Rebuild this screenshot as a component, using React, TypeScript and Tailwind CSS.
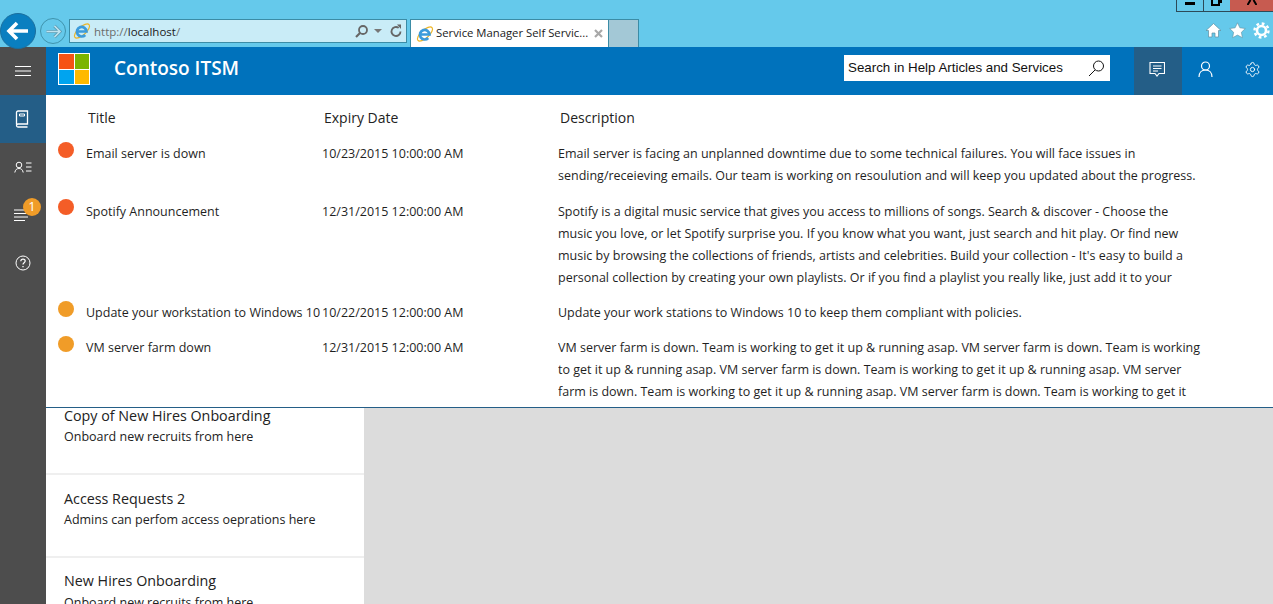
import type { ReactNode } from "react";
import { Settings } from "lucide-react";

const uiFont = { fontFamily: '"Open Sans", "Noto Sans", sans-serif' };

const notices = [
  {
    title: "Email server is down",
    expiry: "10/23/2015 10:00:00 AM",
    dot: "bg-[#f45d27]",
    textTop: "mt-[1px]",
    description:
      "Email server is facing an unplanned downtime due to some technical failures. You will face issues in sending/receieving emails. Our team is working on resoulution and will keep you updated about the progress.",
  },
  {
    title: "Spotify Announcement",
    expiry: "12/31/2015 12:00:00 AM",
    dot: "bg-[#f45d27]",
    textTop: "mt-[2px]",
    description:
      "Spotify is a digital music service that gives you access to millions of songs. Search & discover - Choose the music you love, or let Spotify surprise you. If you know what you want, just search and hit play. Or find new music by browsing the collections of friends, artists and celebrities. Build your collection - It's easy to build a personal collection by creating your own playlists. Or if you find a playlist you really like, just add it to your collection and listen to it any time you want to.",
  },
  {
    title: "Update your workstation to Windows 10",
    expiry: "10/22/2015 12:00:00 AM",
    dot: "bg-[#f09c28]",
    textTop: "mt-[1px]",
    description: "Update your work stations to Windows 10 to keep them compliant with policies.",
  },
  {
    title: "VM server farm down",
    expiry: "12/31/2015 12:00:00 AM",
    dot: "bg-[#f09c28]",
    textTop: "mt-[1px]",
    description:
      "VM server farm is down. Team is working to get it up & running asap. VM server farm is down. Team is working to get it up & running asap. VM server farm is down. Team is working to get it up & running asap. VM server farm is down. Team is working to get it up & running asap. VM server farm is down. Team is working to get it up & running asap.",
  },
];

const cards = [
  { title: "Copy of New Hires Onboarding", text: "Onboard new recruits from here", box: "h-[65px]", head: "leading-[16px]", sub: "mt-[4px]" },
  { title: "Access Requests 2", text: "Admins can perfom access oeprations here", box: "h-[81px]", head: "pt-[15px] leading-[18px]", sub: "mt-[3px]" },
  { title: "New Hires Onboarding", text: "Onboard new recruits from here", box: "h-[81px]", head: "pt-[14px] leading-[18px]", sub: "mt-[4px]" },
];

function IeIcon() {
  return (
    <svg width="18" height="18" viewBox="0 0 18 18" className="shrink-0">
      <ellipse cx="9" cy="9" rx="9.500" ry="4" transform="rotate(-42 9 9)" fill="none" stroke="#eeb422" strokeWidth="1.200" />
      <path d="M4.500 9.500h9a4.800 4.800 0 1 0-1.300 3.500" fill="none" stroke="#3b9bdc" strokeWidth="2.700" />
    </svg>
  );
}

function WinLogo() {
  return (
    <div className="mb-[4px] grid h-8 w-8 grid-cols-2 gap-[1px] bg-white p-[1px]">
      <div className="bg-[#f65314]" />
      <div className="bg-[#7cb400]" />
      <div className="bg-[#00a4ef]" />
      <div className="bg-[#ffb900]" />
    </div>
  );
}

function Chrome() {
  return (
    <div className="relative flex h-[47px] items-end bg-[#65c9eb]">
      {/* window buttons */}
      <div className="absolute right-0 top-0 flex h-[12px] border-b border-l border-[#2c4a58]">
        <div className="flex w-[27px] justify-center border-r border-[#2c4a58]">
          <div className="mt-[2px] h-[3px] w-[10px] bg-black" />
        </div>
        <div className="flex w-[26px] justify-center">
          <svg width="12" height="6" viewBox="0 0 12 6" fill="none" stroke="#000" strokeWidth="2">
            <path d="M1 0v5h7V0M10 0v3" />
          </svg>
        </div>
        <div className="flex w-[43px] justify-center bg-[#c75b50]">
          <svg width="10" height="5" viewBox="0 0 10 5" fill="none" stroke="#000" strokeWidth="2">
            <path d="M3.500 0 0.500 5M6.500 0l3 5" />
          </svg>
        </div>
      </div>

      {/* back + forward */}
      <div className="flex h-full w-[40px] items-end">
        <div className="mb-[-2px] flex h-[36px] w-[36px] items-center justify-center rounded-full border border-[#1b6f9e] bg-[#0a7fc0]">
          <svg width="24" height="20" viewBox="0 0 24 20">
            <path d="M11 2 3 10l8 8M3 10h19" fill="none" stroke="#fff" strokeWidth="3.600" />
          </svg>
        </div>
      </div>
      <div className="mb-[3px] flex h-[26px] w-[26px] items-center justify-center rounded-full border border-[#3f93ad]">
        <svg width="17" height="15" viewBox="0 0 17 15" fill="none">
          <path d="M9.500 2 15 7.500 9.500 13M14 7.500H1.500" stroke="#5b9db5" strokeWidth="3.200" />
          <path d="M9.500 2 15 7.500 9.500 13M14 7.500H1.500" stroke="#bfe3ef" strokeWidth="1.600" />
        </svg>
      </div>

      {/* address bar */}
      <div
        className="mb-[4px] ml-[3px] flex h-[24px] w-[338px] items-center border border-[#3b8ca6] bg-[#c9ecf7] pl-[3px] pr-[3px] text-[11.500px]"
        style={uiFont}
      >
        <IeIcon />
        <span className="ml-[3px] mt-[1px] text-[#6b6b6b]">http://</span>
        <span className="mt-[1px] text-[#1a1a1a]">localhost</span>
        <span className="mt-[1px] text-[#6b6b6b]">/</span>
        <svg width="15" height="15" viewBox="0 0 15 15" className="ml-auto">
          <circle cx="9" cy="6" r="4" fill="none" stroke="#666" strokeWidth="1.800" />
          <path d="M6 9 2 13" stroke="#666" strokeWidth="2.200" />
        </svg>
        <div className="ml-[5px] h-0 w-0 border-x-[4px] border-t-[4px] border-x-transparent border-t-[#777]" />
        <svg width="14" height="14" viewBox="0 0 14 14" className="ml-[7px]">
          <path d="M11.500 7.500a4.500 4.500 0 1 1-1.800-3.600" fill="none" stroke="#666" strokeWidth="1.800" />
          <path d="M8 0.500h4v4.500z" fill="#666" />
        </svg>
      </div>

      {/* tabs */}
      <div
        className="ml-[3px] flex h-[28px] w-[199px] items-center border-x border-t border-[#3b8ca6] bg-white pl-[5px] pr-[5px] text-[11.300px] text-[#1a1a1a]"
        style={uiFont}
      >
        <IeIcon />
        <span className="ml-[2px] whitespace-nowrap">Service Manager Self Servic...</span>
        <svg width="9" height="9" viewBox="0 0 9 9" className="ml-auto" stroke="#a8a8a8" strokeWidth="2.200">
          <path d="m1 1 7 7M8 1 1 8" />
        </svg>
      </div>
      <div className="h-[28px] w-[30px] border-r border-t border-[#3b8ca6] bg-[#a3c8d6]" />

      {/* ie toolbar */}
      <div className="mb-[8px] ml-auto flex items-center gap-[7px] pr-[3px]">
        <svg width="17" height="17" viewBox="0 0 17 17">
          <path d="M8.500 1.500 1 8.500h2.500V15h3.500v-4h3v4h3.500V8.500H16z" fill="#fff" stroke="#5c8ea0" strokeWidth="0.700" />
        </svg>
        <svg width="17" height="17" viewBox="0 0 17 17">
          <path d="m8.500.8 2.400 5 5.400.7-3.900 3.800 1 5.400-4.900-2.600-4.900 2.600 1-5.400L.7 6.500l5.400-.7z" fill="#fff" stroke="#5c8ea0" strokeWidth="0.600" />
        </svg>
        <svg width="17" height="17" viewBox="0 0 17 17" fill="none" stroke="#fff">
          <circle cx="8.500" cy="8.500" r="7" strokeWidth="2.400" strokeDasharray="2.750 2.750" />
          <circle cx="8.500" cy="8.500" r="4.500" strokeWidth="2.600" />
        </svg>
      </div>
    </div>
  );
}

function SideItem({ active, children }: { active?: boolean; children: ReactNode }) {
  return (
    <div className={`relative flex h-[48px] items-center justify-center ${active ? "bg-[#245e87]" : ""}`}>
      {children}
    </div>
  );
}

function Sidebar() {
  return (
    <div className="flex w-[46px] shrink-0 flex-col bg-[#4d4d4d]">
      <SideItem>
        <svg width="18" height="12" viewBox="0 0 18 12" stroke="#fff">
          <path d="M1 1.500h16M1 6h16M1 10.500h16" />
        </svg>
      </SideItem>
      <SideItem active>
        <svg width="16" height="18" viewBox="0 0 16 18" fill="none" stroke="#fff" className="-ml-[2px]">
          <path d="M2.500 14.500V2.500a1.500 1.500 0 0 1 1.500-1.500h9.500v13H4a1.500 1.500 0 0 0 0 3h9.500" strokeWidth="1.300" />
          <path d="M5.500 4h5v2h-5z" />
        </svg>
      </SideItem>
      <SideItem>
        <svg width="18" height="12" viewBox="0 0 18 12" fill="none" stroke="#fff" className="-ml-[1px]">
          <circle cx="5" cy="4" r="2.800" />
          <path d="M.8 11.500c.5-2.800 2-4 4.200-4s3.700 1.200 4.200 4M12 2h5.500M12 6h5.500M12 10h5.500" />
        </svg>
      </SideItem>
      <SideItem>
        <svg width="16" height="12" viewBox="0 0 16 12" stroke="#fff" className="-ml-[2px]">
          <path d="M0 1h11M0 4.500h14M0 8h14M0 11.500h11" />
        </svg>
        <span
          className="absolute left-[23px] top-[7px] flex h-[18px] w-[18px] items-center justify-center rounded-full bg-[#f09c28] text-[13px] text-white"
          style={uiFont}
        >
          1
        </span>
      </SideItem>
      <SideItem>
        <svg width="16" height="16" viewBox="0 0 16 16" fill="none" stroke="#fff" className="-ml-[1px]">
          <circle cx="8" cy="8" r="7" />
          <path d="M5.800 6.200C5.900 4.800 6.900 4.200 8 4.200c1.200 0 2.200.7 2.200 1.900 0 1.700-2.200 1.600-2.200 3.400" strokeWidth="1.200" />
          <path d="M8 11v1.300" strokeWidth="1.300" />
        </svg>
      </SideItem>
    </div>
  );
}

function Header() {
  return (
    <div className="flex h-[48px] shrink-0 items-center bg-[#0072bc] pl-[12px] text-white">
      <WinLogo />
      <div className="mb-[6px] ml-[24px] text-[19px] font-semibold leading-none" style={uiFont}>
        Contoso ITSM
      </div>
      <div
        className="mb-[6px] ml-auto flex h-[26px] w-[266px] items-center bg-white pl-[4px] pr-[5px] text-[13.330px] text-[#111]"
        style={{ fontFamily: '"Liberation Sans", Arial, sans-serif' }}
      >
        <span className="whitespace-nowrap">Search in Help Articles and Services</span>
        <svg width="17" height="17" viewBox="0 0 17 17" fill="none" stroke="#111" className="ml-auto">
          <circle cx="10.500" cy="6" r="5" />
          <path d="M7 10 1 16" />
        </svg>
      </div>
      <div className="ml-[24px] flex h-full w-[48px] items-center justify-center bg-[#245e87] pb-[4px] pr-[2px]">
        <svg width="16" height="16" viewBox="0 0 16 16" fill="none" stroke="#fff">
          <path d="M1 1.500h14.500v11h-5.500L8 15l-2-2.500H1z" strokeWidth="1.100" />
          <path d="M4 5h8.500M4 7.500h8.500M4 10h5" />
        </svg>
      </div>
      <div className="flex h-full w-[46px] items-center justify-center pb-[4px]">
        <svg width="15" height="16" viewBox="0 0 15 16" fill="none" stroke="#fff">
          <circle cx="7.500" cy="5" r="4" strokeWidth="1.200" />
          <path d="M1 16c0-4 2.500-7 6.500-7s6.500 3 6.500 7" strokeWidth="1.200" />
        </svg>
      </div>
      <div className="flex h-full w-[45px] items-center justify-center pb-[4px] pl-[4px]">
        <Settings size={17} strokeWidth={1.3} />
      </div>
    </div>
  );
}

function NoticePanel() {
  return (
    <div className="h-[313px] shrink-0 overflow-hidden border-b border-[#245e87] bg-white pl-[12px] text-[12.500px] text-[#1f1f1f]" style={uiFont}>
      <div className="flex h-[47px] items-center pb-[2px] pl-[30px] text-[14px] text-[#222]">
        <div className="w-[236px]">Title</div>
        <div className="w-[236px]">Expiry Date</div>
        <div>Description</div>
      </div>
      {notices.map((n) => (
        <div key={n.title} className="mb-[12px] flex items-start">
          <div className={`h-4 w-4 shrink-0 rounded-full ${n.dot}`} />
          <div className={`${n.textTop} ml-[12px] w-[236px] shrink-0 whitespace-nowrap leading-[22px]`}>{n.title}</div>
          <div className={`${n.textTop} w-[236px] shrink-0 leading-[22px]`}>{n.expiry}</div>
          <div className={`${n.textTop} max-h-[88px] w-[645px] overflow-hidden leading-[22px]`}>{n.description}</div>
        </div>
      ))}
    </div>
  );
}

export default function App() {
  return (
    <div className="flex h-[604px] w-[1273px] flex-col overflow-hidden">
      <Chrome />
      <div className="flex min-h-0 flex-1">
        <Sidebar />
        <div className="flex min-w-0 flex-1 flex-col bg-[#dcdcdc]">
          <Header />
          <NoticePanel />
          <div className="w-[318px] bg-[#efefef]" style={uiFont}>
            {cards.map((c) => (
              <div key={c.title} className={`${c.box} mb-[2px] bg-white pl-[18px] text-[#222]`}>
                <div className={`${c.head} text-[14.300px]`}>{c.title}</div>
                <div className={`${c.sub} text-[12.500px] leading-[18px]`}>{c.text}</div>
              </div>
            ))}
          </div>
        </div>
      </div>
    </div>
  );
}
